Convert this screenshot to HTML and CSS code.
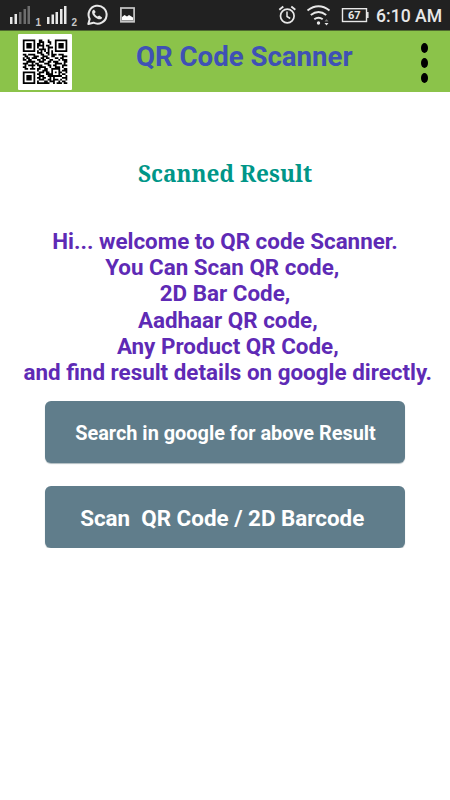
FILE: index.html
```html
<!DOCTYPE html>
<html lang="en">
<head>
    <meta charset="UTF-8">
    <meta name="viewport" content="width=device-width, initial-scale=1">
    <title>QR Code Scanner</title>
    <link rel="stylesheet" href="styles.css">
</head>
<body>
<div class="status">
    <svg class="signals" width="140" height="30" viewBox="0 0 140 30">
        <g fill="#e8e8e8">
            <rect x="10" y="17" width="2.5" height="7"/>
            <rect x="14.5" y="14" width="2.5" height="10"/>
            <rect x="47" y="17" width="2.5" height="7"/>
            <rect x="51.5" y="14.5" width="2.5" height="9.5"/>
            <rect x="55.5" y="12" width="2.5" height="12"/>
            <rect x="60" y="9" width="2.5" height="15"/>
            <rect x="64" y="6" width="2.5" height="18"/>
        </g>
        <g fill="#6d6d6d">
            <rect x="19" y="12" width="2.5" height="12"/>
            <rect x="23.5" y="9" width="2.5" height="15"/>
            <rect x="27.5" y="6" width="2.5" height="18"/>
        </g>
        <text class="sim" x="35.5" y="25.500">1</text>
        <text class="sim" x="71.5" y="25.500">2</text>
        <path d="M88.300 24l1.400-5A9 9 0 1 1 93.500 22.700z" fill="none" stroke="#e8e8e8" stroke-width="2" stroke-linejoin="round"/>
        <path d="M94 9.500c-3.500 1.400-1.600 5.500 1 7.700 2.700 2.200 6.400 3.300 7.100.2l-2.900-2-1.600 1.200c-1.500-.6-2.400-1.600-3.100-3l1.200-1.500z" fill="#e8e8e8"/>
        <rect x="120.900" y="8" width="13.200" height="13.800" fill="none" stroke="#c8c8c8" stroke-width="1.700"/>
        <path d="M122 20.500v-3.500l2.500-2 2.500 1.500 2-1.500 4 2.500v3z" fill="#fff"/>
    </svg>
    <div class="status-right">
        <svg width="96" height="30" viewBox="274 0 96 30" fill="none" stroke="#e8e8e8">
            <circle cx="287.300" cy="16" r="6.800" stroke-width="1.700"/>
            <path d="M287 11.500v5l3.200 2" stroke-width="1.500"/>
            <path d="M279.300 9.800l4-3.300M291.300 6.500l4 3.300" stroke-width="1.900"/>
            <path d="M307.500 10.500q11-8.500 22 0M310.800 15q7.700-6 15.400 0M314.300 19.300q4.200-3.300 8.400 0" stroke-width="1.900"/>
            <circle cx="318.500" cy="23" r="1.700" fill="#e8e8e8" stroke="none"/>
            <path d="M324.500 21.500l2-2.500 2 2.500z" fill="#777" stroke="none"/>
            <path d="M324.500 23l2 2.500 2-2.500z" fill="#e8e8e8" stroke="none"/>
            <rect x="342.500" y="8.700" width="24" height="12.800" stroke-width="1.400"/>
            <path d="M367.800 12v6" stroke-width="1.500"/>
            <text class="battery" x="348" y="19.300">67</text>
        </svg>
        <span class="clock">6:10 AM</span>
    </div>
</div>
<header class="bar">
    <svg class="qr" viewBox="0 0 54 56" preserveAspectRatio="none"><path id="modules"/></svg>
    <h1>QR Code Scanner</h1>
    <div class="menu"><i></i><i></i><i></i></div>
</header>
<main>
    <h2>Scanned Result</h2>
    <p class="intro">Hi... welcome to QR code Scanner.
You Can Scan QR code, 
2D Bar Code,
 Aadhaar QR code,
 Any Product QR Code,
 and find result details on google directly.</p>
    <button class="search">Search in google for above Result</button>
    <button class="scan">Scan  QR Code / 2D Barcode </button>
</main>
<script src="qr.js"></script>
</body>
</html>
```
FILE: styles.css
```css
* {
    box-sizing: border-box;
    margin: 0;
    padding: 0;
}
body {
    background: #fff;
    font-family: Roboto, "Liberation Sans", sans-serif;
}
.status {
    display: flex;
    justify-content: space-between;
    height: 30px;
    background: #212121;
    color: #e8e8e8;
}
.status svg {
    display: block;
}
.status-right {
    display: flex;
    padding-right: 8px;
}
.sim {
    font: bold 10px "Liberation Sans", sans-serif;
    fill: #c8c8c8;
}
.battery {
    font: bold 11px Roboto, sans-serif;
    fill: #e8e8e8;
    stroke: none;
}
.clock {
    width: 66px;
    margin-left: 6px;
    font-size: 17.600px;
    font-weight: 500;
    line-height: 32px;
    white-space: nowrap;
}
.bar {
    display: flex;
    height: 62px;
    padding: 3px 22px 0 18px;
    background: #8bc34a;
    border-top: 1px solid #4f6b2e;
}
.qr {
    width: 54px;
    height: 56px;
    border-radius: 1px;
    background: #fff;
}
.bar h1 {
    flex: 1;
    padding-left: 64px;
    color: #3f51b5;
    font-size: 27.600px;
    line-height: 45px;
    white-space: nowrap;
}
.menu {
    display: flex;
    flex-direction: column;
    gap: 5px;
    padding-top: 9px;
}
.menu i {
    width: 7px;
    height: 10px;
    border-radius: 50%;
    background: #000;
}
main {
    display: flex;
    flex-direction: column;
    align-items: center;
    padding-top: 66px;
}
h2 {
    color: #009688;
    font-family: "Noto Serif", "DejaVu Serif Condensed", "DejaVu Serif", serif;
    font-size: 22.600px;
    font-stretch: condensed;
    line-height: 32px;
    white-space: nowrap;
}
.intro {
    margin-top: 38px;
    color: #5e2ab5;
    font-size: 22.400px;
    font-weight: bold;
    line-height: 26.200px;
    text-align: center;
    white-space: pre;
}
button {
    width: 360px;
    height: 62px;
    border: 0;
    border-radius: 6px;
    background: #607d8b;
    box-shadow: 0 1px 1px #b0bcc0;
    color: #fff;
    font: bold 19.900px Roboto, sans-serif;
    white-space: pre;
}
.search {
    margin-top: 16px;
    padding: 2px 0 0 1px;
}
.scan {
    margin-top: 23px;
    padding-top: 1px;
    font-size: 22.400px;
}
```
FILE: qr.js
```javascript
var rows = [
    '1111111001100010001111111',
    '1000001001110011001000001',
    '1011101011010001001011101',
    '1011101011110110001011101',
    '1011101010010011101011101',
    '1000001001111010001000001',
    '1111111010101010101111111',
    '0000000011100110100000000',
    '1101111000110010111011100',
    '0110001110011100110000111',
    '1011011100110110001101100',
    '1101100011011001100010111',
    '0011111001110011011100011',
    '1110010110001110001111010',
    '0101111011100011011000111',
    '1100010001111001001110100',
    '0110111011001100111110011',
    '0000000010011100100010111',
    '1111111001110110101011001',
    '1000001011000111100010110',
    '1011101001110011111111001',
    '1011101011011001010000111',
    '1011101001110011011101001',
    '1000001010001101110010110',
    '1111111011111110010111011'
];
var size = 1.78, d = '';
rows.forEach(function (row, y) {
    row.split('').forEach(function (cell, x) {
        if (cell === '1') {
            d += 'M' + (4.8 + x * size) + ' ' + (5.5 + y * size) + 'h' + size + 'v' + size + 'h-' + size + 'z';
        }
    });
});
document.querySelector('#modules').setAttribute('d', d);
```
